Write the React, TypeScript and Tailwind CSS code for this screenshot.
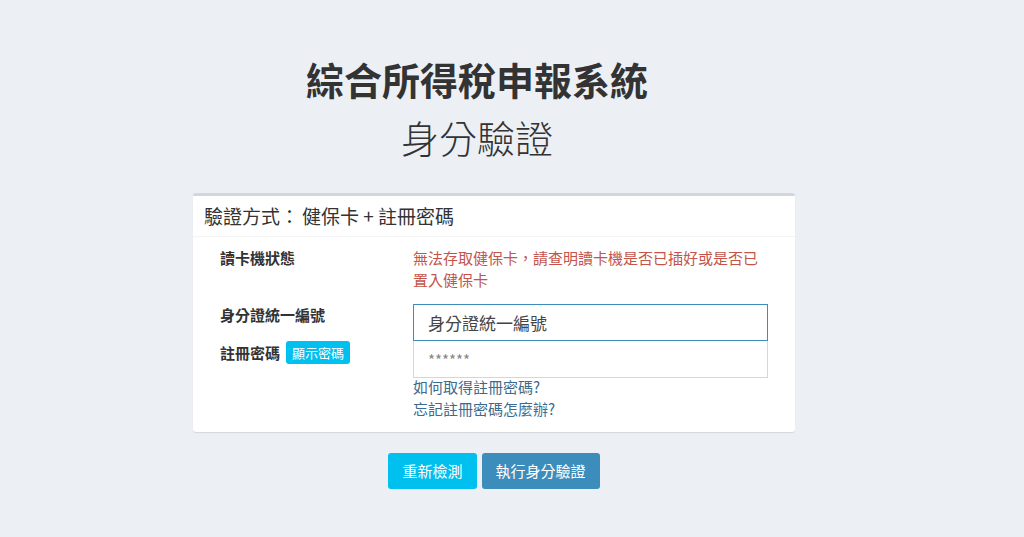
export default function App() {
  return (
    <div
      className="min-h-[537px] w-full bg-[#ecf0f5] text-[#333]"
      style={{ fontFamily: '"Noto Sans CJK TC", "Noto Sans", sans-serif' }}
    >
      <div className="mx-auto w-[602px] pt-[55px] translate-x-[-18px]">
        <div className="pr-[34px] text-center">
          <h1 className="text-[38px] font-bold leading-[48px] text-[#333]">
            綜合所得稅申報系統
          </h1>
          <h2 className="mt-[10px] text-[38px] font-light leading-[48px] text-[#333]">
            身分驗證
          </h2>
        </div>

        <div className="mt-[32px] rounded-[3px] border-t-[3px] border-[#d2d6de] bg-white shadow-[0_1px_1px_rgba(0,0,0,0.1)]">
          <div className="border-b border-[#f4f4f4] px-[11px] py-[9px] text-[19px] leading-[22px]">
            驗證方式：<span className="ml-[3px]">健保卡 + 註冊密碼</span>
          </div>
          <div className="pt-[10px] pb-[12px] text-[15px] leading-[22px]">
            <div className="flex">
              <div className="w-[220px] pl-[27px] font-bold">讀卡機狀態</div>
              <div className="w-[355px] text-[#c4544a]">
                無法存取健保卡，請查明讀卡機是否已插好或是否已置入健保卡
              </div>
            </div>
            <div className="mt-[13px] flex">
              <div className="w-[220px] pl-[27px] font-bold">
                <div>身分證統一編號</div>
                <div className="mt-[15px] flex items-center gap-[6px]">
                  <span>註冊密碼</span>
                  <span className="rounded-[3px] bg-[#00c0ef] px-[6px] text-[13px] font-normal leading-[23px] text-white">
                    顯示密碼
                  </span>
                </div>
              </div>
              <div className="w-[355px]">
                <input
                  className="block h-[37px] w-full border border-[#3c8dbc] px-[14px] text-[17px] text-[#444] outline-none placeholder:text-[#444]"
                  placeholder="身分證統一編號"
                />
                <input
                  type="password"
                  className="block h-[37px] w-full border border-t-0 border-[#d2d6de] px-[14px] text-[15px] text-[#555] outline-none placeholder:text-[#888]"
                  placeholder="******"
                />
                <div className="-mt-[2px] flex flex-col items-start">
                  <a href="#" className="text-[#3c6b8e]">如何取得註冊密碼?</a>
                  <a href="#" className="text-[#3c6b8e]">忘記註冊密碼怎麼辦?</a>
                </div>
              </div>
            </div>
          </div>
        </div>

        <div className="mt-[21px] flex justify-center gap-[5px] text-[15px]">
          <button className="h-[36px] rounded-[3px] bg-[#00c0ef] px-[14px] text-white">
            重新檢測
          </button>
          <button className="h-[36px] rounded-[3px] bg-[#3c8dbc] px-[14px] text-white">
            執行身分驗證
          </button>
        </div>
      </div>
    </div>
  );
}
